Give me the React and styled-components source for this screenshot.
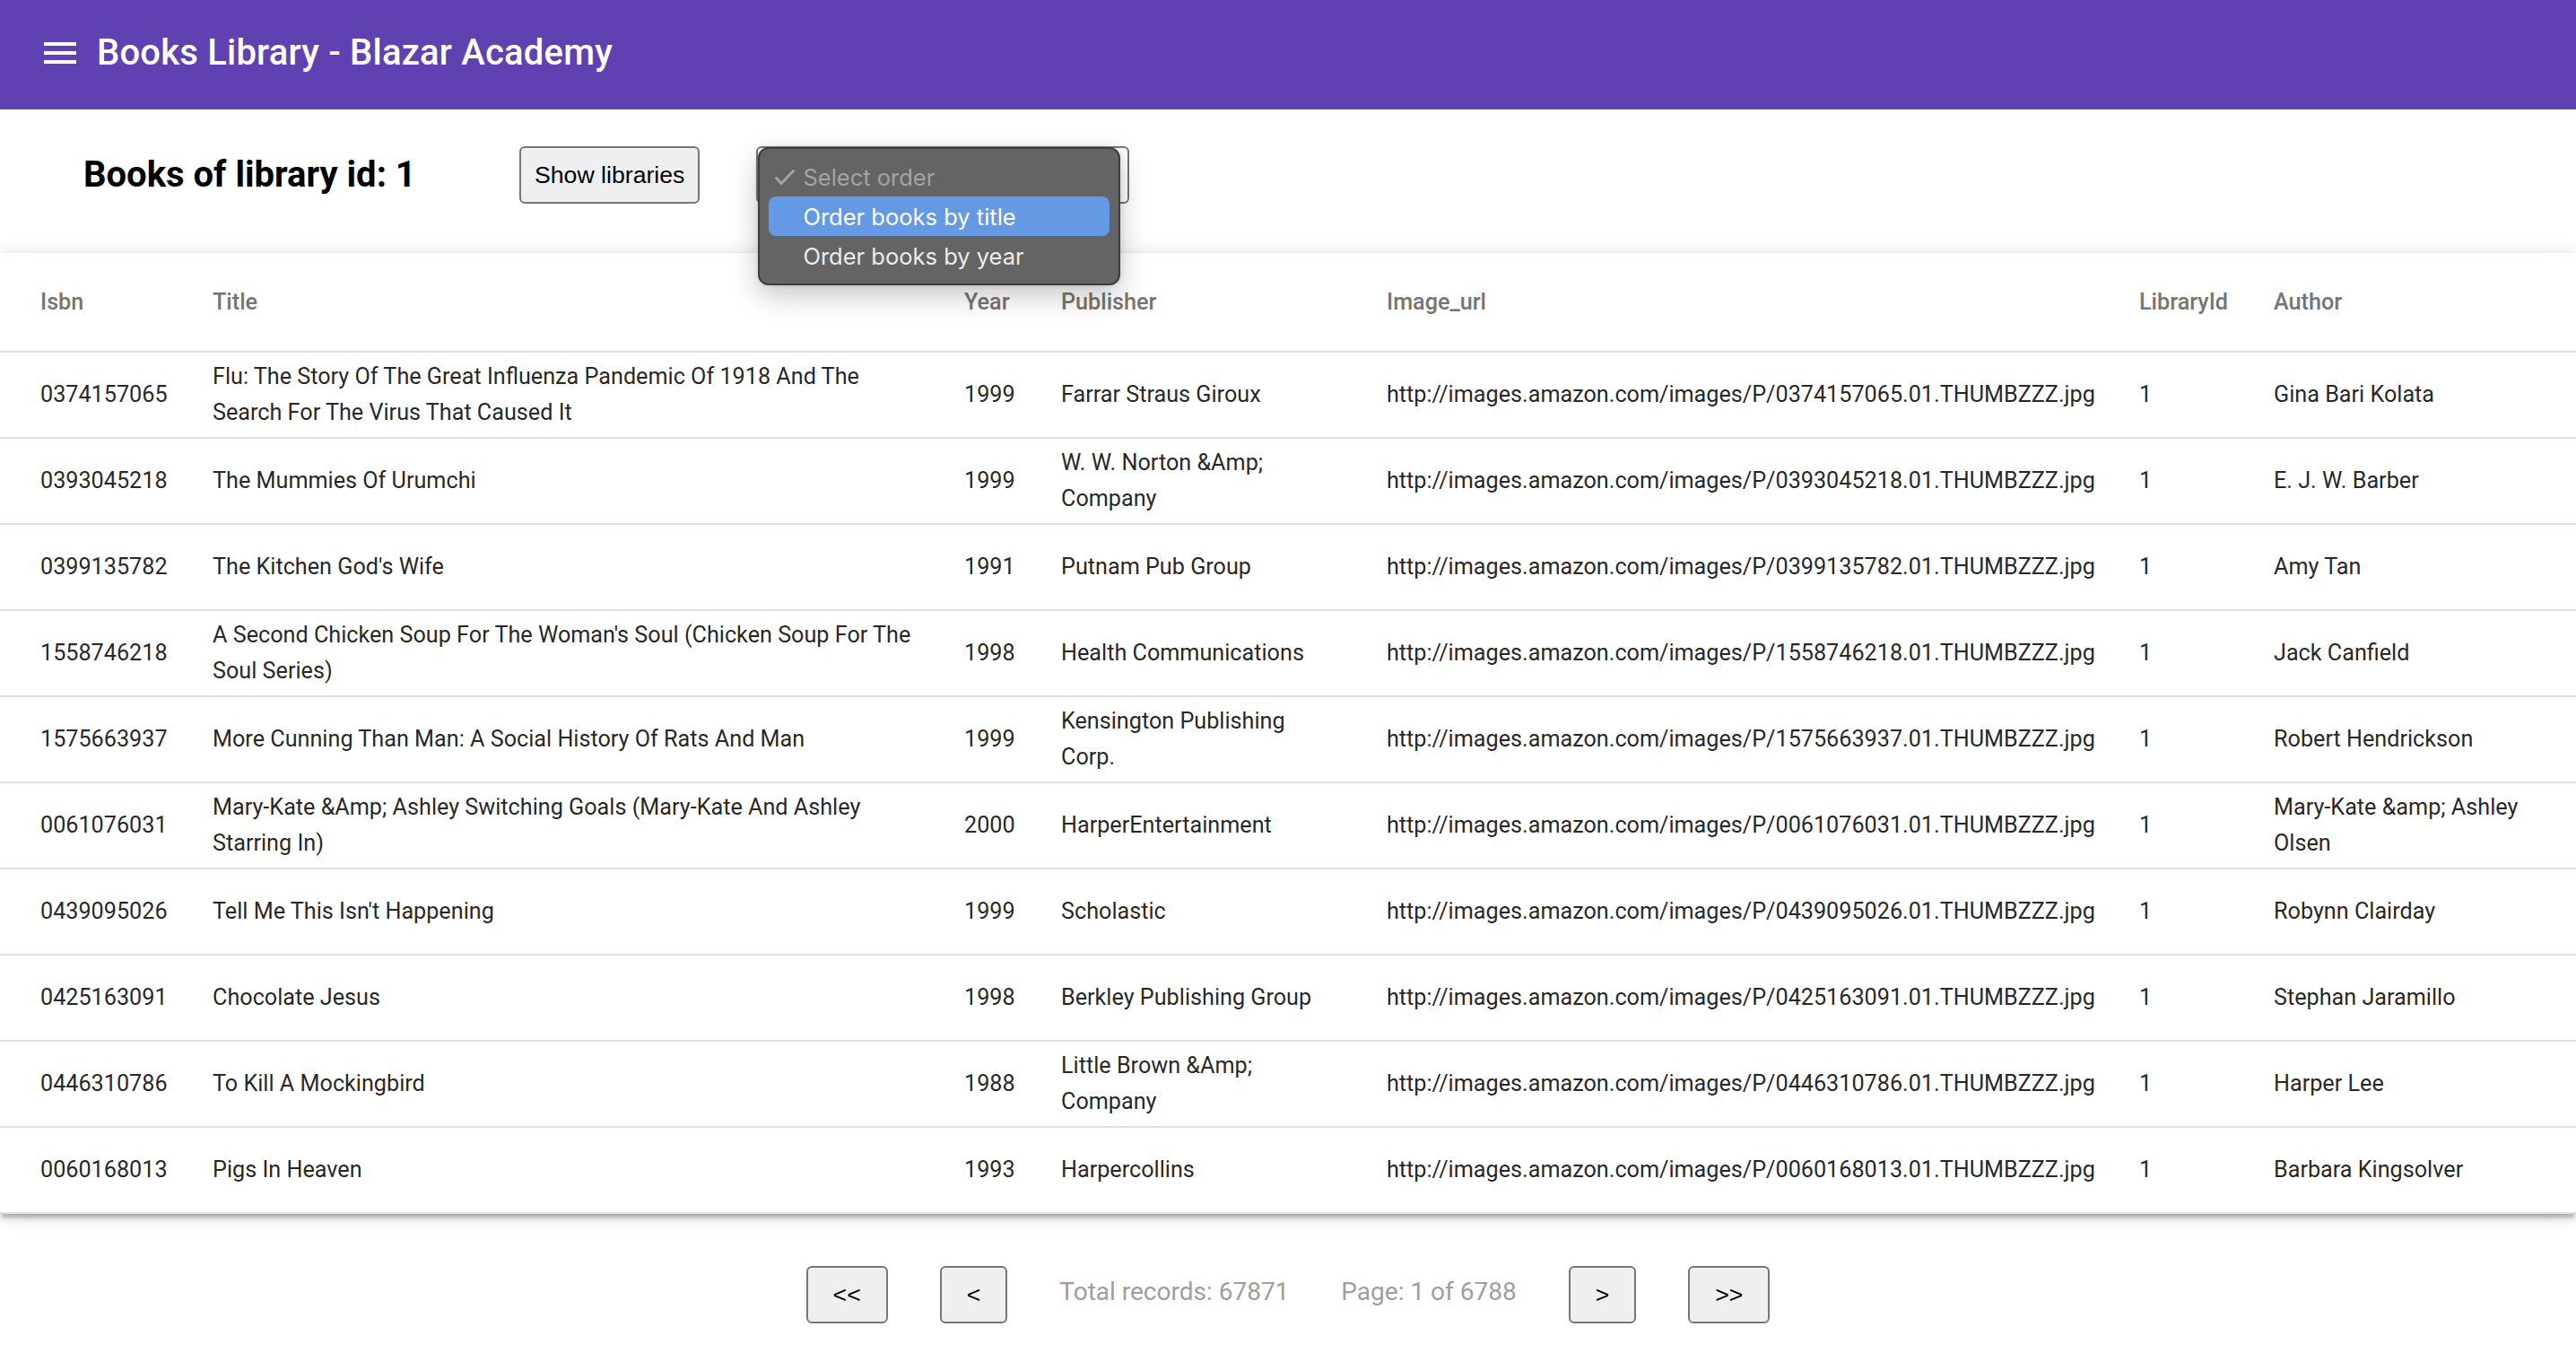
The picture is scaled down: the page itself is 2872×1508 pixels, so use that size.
import React from "react";
import styled, { createGlobalStyle } from "styled-components";

const GlobalStyle = createGlobalStyle`
  body {
    margin: 0;
    padding: 0;
    background: #ffffff;
    font-family: Roboto, "Liberation Sans", Arial, sans-serif;
    color: rgba(0, 0, 0, 0.87);
  }
`;

// App bar
const AppBar = styled.header`
  height: 122px;
  box-sizing: border-box;
  padding: 0 0 5px 43px;
  background: #6041b1;
  display: flex;
  align-items: center;
  gap: 17px;
  color: #ffffff;
`;

const MenuButton = styled.div`
  width: 48px;
  height: 48px;
  display: flex;
  align-items: center;
  justify-content: center;
`;

const AppTitle = styled.h1`
  margin: 0;
  font-size: 40px;
  font-weight: 500;
  letter-spacing: 0.2px;
`;

// Top controls
const TopBar = styled.div`
  display: flex;
  align-items: center;
  padding: 41px 0 55px 93px;
`;

const PageTitle = styled.h2`
  margin: 0;
  flex: 0 0 486px;
  font-size: 40px;
  font-weight: 700;
  line-height: 64px;
  color: #000;
`;

const NativeButton = styled.button`
  height: 64px;
  padding: 0 ${({ $pad }) => $pad || 15}px;
  border: 2px solid #767676;
  border-radius: 6px;
  background: #efefef;
  color: #000;
  font-family: "Liberation Sans", Arial, sans-serif;
  font-size: 26.67px;
  cursor: pointer;
`;

const SelectWrap = styled.div`
  position: relative;
  margin-left: 63px;
  width: 416px;
  height: 64px;
  box-sizing: border-box;
  border: 2px solid #767676;
  border-radius: 6px;
  background: #fff;
  display: flex;
  align-items: center;
  justify-content: flex-end;
  padding-right: 8px;
`;

const Popup = styled.div`
  position: absolute;
  top: -1px;
  left: 0px;
  width: 404px;
  box-sizing: border-box;
  padding: 9px 10px;
  background: #646464;
  border: 2px solid #3d3d3d;
  border-radius: 12px;
  box-shadow: 0 12px 32px rgba(0, 0, 0, 0.22), 0 0 6px rgba(0, 0, 0, 0.12);
  z-index: 10;
  font-family: Inter, "Liberation Sans", Arial, sans-serif;
  font-size: 25.5px;
`;

const Option = styled.div`
  position: relative;
  height: 44px;
  display: flex;
  align-items: center;
  padding-left: 38px;
  border-radius: 8px;
  background: ${({ $active }) => ($active ? "#6499e3" : "transparent")};
  color: ${({ $disabled, $active }) =>
    $disabled ? "#a3a3a3" : $active ? "#ffffff" : "#ececec"};
`;

const Check = styled.svg`
  position: absolute;
  left: 6px;
  top: 13px;
`;

// Table
const Paper = styled.div`
  background: #fff;
  box-shadow: 0 6px 4px -2px rgba(0, 0, 0, 0.2), 0 4px 10px rgba(0, 0, 0, 0.14),
    0 2px 24px rgba(0, 0, 0, 0.1);
`;

const Table = styled.table`
  width: 100%;
  table-layout: fixed;
  border-collapse: separate;
  border-spacing: 0;
`;

const HeadCell = styled.th`
  box-sizing: border-box;
  height: 111px;
  padding: 0 20px 0 ${({ $first }) => ($first ? 45 : 0)}px;
  border-bottom: 2px solid #e0e0e0;
  text-align: left;
  font-size: 25.2px;
  font-weight: 500;
  line-height: 48px;
  color: #757575;
`;

const Cell = styled.td`
  box-sizing: border-box;
  height: 96px;
  padding: 0 ${({ $right }) => $right || 20}px 0 ${({ $first }) => ($first ? 45 : 0)}px;
  border-bottom: 2px solid #e0e0e0;
  font-size: 25.2px;
  line-height: 40px;
  color: rgba(0, 0, 0, 0.87);
  white-space: ${({ $nowrap }) => ($nowrap ? "nowrap" : "normal")};
  vertical-align: middle;
`;

// Pagination
const Pagination = styled.div`
  display: flex;
  justify-content: center;
  align-items: center;
  gap: 58px;
  margin-top: 58px;
`;

const PageInfo = styled.span`
  padding-bottom: 8px;
  font-size: 28px;
  color: #9e9e9e;
`;

const columns = [
  { key: "isbn", label: "Isbn", width: 237, right: 20 },
  { key: "title", label: "Title", width: 838, right: 48 },
  { key: "year", label: "Year", width: 108, right: 20 },
  { key: "publisher", label: "Publisher", width: 363, right: 63 },
  { key: "image", label: "Image_url", width: 839, right: 20, nowrap: true },
  { key: "library", label: "LibraryId", width: 150, right: 20 },
  { key: "author", label: "Author", width: 337, right: 30 },
];

const img = (isbn) => `http://images.amazon.com/images/P/${isbn}.01.THUMBZZZ.jpg`;

const books = [
  ["0374157065", "Flu: The Story Of The Great Influenza Pandemic Of 1918 And The Search For The Virus That Caused It", "1999", "Farrar Straus Giroux", "Gina Bari Kolata"],
  ["0393045218", "The Mummies Of Urumchi", "1999", "W. W. Norton &Amp; Company", "E. J. W. Barber"],
  ["0399135782", "The Kitchen God's Wife", "1991", "Putnam Pub Group", "Amy Tan"],
  ["1558746218", "A Second Chicken Soup For The Woman's Soul (Chicken Soup For The Soul Series)", "1998", "Health Communications", "Jack Canfield"],
  ["1575663937", "More Cunning Than Man: A Social History Of Rats And Man", "1999", "Kensington Publishing Corp.", "Robert Hendrickson"],
  ["0061076031", "Mary-Kate &Amp; Ashley Switching Goals (Mary-Kate And Ashley Starring In)", "2000", "HarperEntertainment", "Mary-Kate &amp; Ashley Olsen"],
  ["0439095026", "Tell Me This Isn't Happening", "1999", "Scholastic", "Robynn Clairday"],
  ["0425163091", "Chocolate Jesus", "1998", "Berkley Publishing Group", "Stephan Jaramillo"],
  ["0446310786", "To Kill A Mockingbird", "1988", "Little Brown &Amp; Company", "Harper Lee"],
  ["0060168013", "Pigs In Heaven", "1993", "Harpercollins", "Barbara Kingsolver"],
].map(([isbn, title, year, publisher, author]) => ({
  isbn,
  title,
  year,
  publisher,
  image: img(isbn),
  library: "1",
  author,
}));

const MenuIcon = () => (
  <svg width="48" height="48" viewBox="0 0 24 24" fill="#fff">
    <path d="M3 18h18v-2H3v2zm0-5h18v-2H3v2zm0-7v2h18V6H3z" />
  </svg>
);

const App = () => (
  <>
    <GlobalStyle />
    <AppBar>
      <MenuButton>
        <MenuIcon />
      </MenuButton>
      <AppTitle>Books Library - Blazar Academy</AppTitle>
    </AppBar>

    <TopBar>
      <PageTitle>Books of library id: 1</PageTitle>
      <NativeButton>Show libraries</NativeButton>
      <SelectWrap>
        <svg width="14" height="10" viewBox="0 0 14 10">
          <path d="M1 2l6 6 6-6" fill="none" stroke="#222" strokeWidth="2" />
        </svg>
        <Popup>
          <Option $disabled>
            <Check width="24" height="19" viewBox="0 0 24 19">
              <path d="M2.5 10.5l5.5 6L21.5 2.5" fill="none" stroke="#a3a3a3" strokeWidth="3" strokeLinecap="round" strokeLinejoin="round" />
            </Check>
            Select order
          </Option>
          <Option $active>Order books by title</Option>
          <Option>Order books by year</Option>
        </Popup>
      </SelectWrap>
    </TopBar>

    <Paper>
      <Table>
        <colgroup>
          {columns.map((c) => (
            <col key={c.key} style={{ width: c.width }} />
          ))}
        </colgroup>
        <thead>
          <tr>
            {columns.map((c, i) => (
              <HeadCell key={c.key} $first={i === 0}>
                {c.label}
              </HeadCell>
            ))}
          </tr>
        </thead>
        <tbody>
          {books.map((b) => (
            <tr key={b.isbn}>
              {columns.map((c, i) => (
                <Cell key={c.key} $first={i === 0} $right={c.right} $nowrap={c.nowrap}>
                  {b[c.key]}
                </Cell>
              ))}
            </tr>
          ))}
        </tbody>
      </Table>
    </Paper>

    <Pagination>
      <NativeButton $pad={28}>&lt;&lt;</NativeButton>
      <NativeButton $pad={28}>&lt;</NativeButton>
      <PageInfo>Total records: 67871</PageInfo>
      <PageInfo>Page: 1 of 6788</PageInfo>
      <NativeButton $pad={28}>&gt;</NativeButton>
      <NativeButton $pad={28}>&gt;&gt;</NativeButton>
    </Pagination>
  </>
);

export default App;
